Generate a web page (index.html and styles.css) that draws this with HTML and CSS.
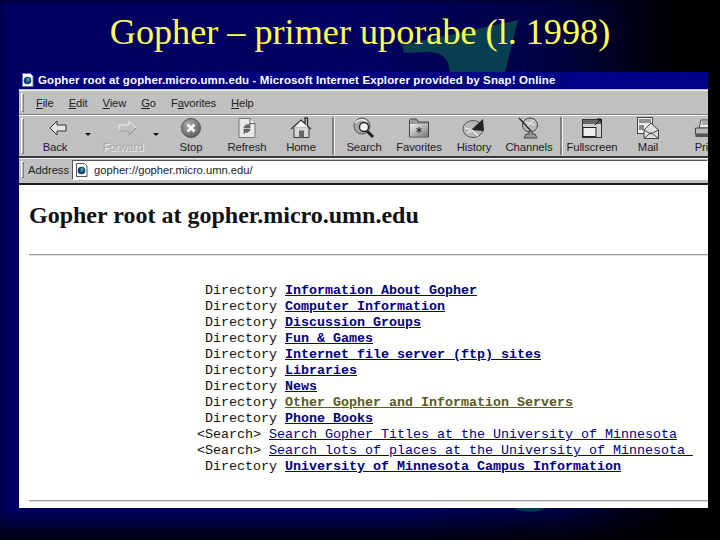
FILE: index.html
```html
<!DOCTYPE html>
<html lang="sl">
<head>
<meta charset="utf-8">
<title>Gopher – primer uporabe</title>
<link rel="stylesheet" href="styles.css">
</head>
<body>
<main class="slide">
  <svg class="bg-shape" width="720" height="540" viewBox="0 0 720 540" aria-hidden="true">
    <path d="M402 45 L518 20 L505 72 L450 72 C449 60 443 52 428 52 L404 53 Z" fill="#073f50"/>
    <path d="M514 508 C522 513 538 513 546 508 Z" fill="#063650"/>
  </svg>
  <h1 class="slide-title">Gopher – primer uporabe (l. 1998)</h1>
  <section class="window">
    <div class="titlebar">
      <svg class="page-icon" width="13" height="14" viewBox="0 0 13 14"><path d="M1.500 .5h8l2.500 2.500v10.500H1.500z" fill="#fff" stroke="#777"/><circle cx="6.500" cy="7.500" r="3.800" fill="#123a78"/><path d="M5 5.500l3-1 1 3-3 2z" fill="#3a9a9a"/></svg>
      <span class="title-text">Gopher root at gopher.micro.umn.edu - Microsoft Internet Explorer provided by Snap! Online</span>
    </div>
    <div class="bar menubar">
      <span class="grip"></span>
      <span class="menu"><u>F</u>ile</span>
      <span class="menu"><u>E</u>dit</span>
      <span class="menu"><u>V</u>iew</span>
      <span class="menu"><u>G</u>o</span>
      <span class="menu">F<u>a</u>vorites</span>
      <span class="menu"><u>H</u>elp</span>
    </div>
    <div class="bar toolbar">
      <span class="grip"></span>
      <div class="tool w50">
        <svg width="28" height="22" viewBox="0 0 28 22"><path d="M9 11l7-7v4h9v6h-9v4z" fill="#e4e4e4" stroke="#333"/></svg>
        <span>Back</span>
      </div>
      <span class="drop"></span>
      <div class="tool w50 off">
        <svg width="28" height="22" viewBox="0 0 28 22"><path d="M27 11l-7-7v4H10v6h10v4z" fill="none" stroke="#f0f0f0"/><path d="M27 11l-7 7v-4H10" fill="none" stroke="#8c8c8c"/></svg>
        <span>Forward</span>
      </div>
      <span class="drop drop-last"></span>
      <div class="tool w54">
        <svg width="22" height="22" viewBox="0 0 22 22"><defs><radialGradient id="stopfill" cx=".35" cy=".3" r=".8"><stop offset="0" stop-color="#aaa"/><stop offset="1" stop-color="#5a5a5a"/></radialGradient></defs><circle cx="11" cy="11" r="9.500" fill="url(#stopfill)" stroke="#555"/><path d="M7.500 7.500l7 7M14.500 7.500l-7 7" stroke="#fff" stroke-width="2.600"/></svg>
        <span>Stop</span>
      </div>
      <div class="tool w58">
        <svg width="20" height="22" viewBox="0 0 20 22"><path d="M2 1.500h11l5 5v14H2z" fill="#e8e8e8" stroke="#777"/><path d="M13 1.500v5h5" fill="#fff" stroke="#555"/><path d="M7 11c0-3 3-4 5-3l1-2v5h-3M13 12c0 3-3 4-5 3l-1 2v-5h3" fill="#666" stroke="#555" stroke-width=".6"/></svg>
        <span>Refresh</span>
      </div>
      <div class="tool w50">
        <svg width="22" height="22" viewBox="0 0 22 22"><path d="M4 11v9.500h15V11" fill="#d8d8d8" stroke="#333"/><path d="M1 12L11 3l4 3.500V1h2.500v8L21 12" fill="none" stroke="#333" stroke-width="1.300"/><path d="M11 4l6 6H5z" fill="#f4f4f4"/><rect x="9" y="13.500" width="5" height="7" fill="#666"/></svg>
        <span>Home</span>
      </div>
      <span class="sep"></span>
      <div class="tool w48">
        <svg width="24" height="22" viewBox="0 0 24 22"><circle cx="10" cy="9" r="8" fill="#a8a8a8" stroke="#555"/><path d="M3 6c3-4 9-4 12-1" stroke="#eee" stroke-width="1.500" fill="none"/><circle cx="12" cy="10" r="4.500" fill="#f0f0f0" stroke="#222" stroke-width="1.300"/><path d="M15 14l6 6" stroke="#222" stroke-width="3"/></svg>
        <span>Search</span>
      </div>
      <div class="tool w62">
        <svg width="22" height="20" viewBox="0 0 22 20"><defs><linearGradient id="favfill" x1="0" x2="1" y1="0" y2="1"><stop offset="0" stop-color="#f2f2f2"/><stop offset="1" stop-color="#777"/></linearGradient></defs><path d="M1.500 5V2.500c0-1 1-1.500 2-1.500h5l2 3h10v15H1.500z" fill="#9a9a9a" stroke="#444"/><path d="M2 6h18v12.500H2z" fill="url(#favfill)"/><path d="M11 9v6M8.400 10.500l5.200 3M13.600 10.500l-5.200 3" stroke="#222"/></svg>
        <span>Favorites</span>
      </div>
      <div class="tool w48">
        <svg width="24" height="22" viewBox="0 0 24 22"><ellipse cx="11" cy="12" rx="10" ry="8.500" fill="#b8b8b8" stroke="#555"/><path d="M9 13L21 2l1 12z" fill="#222"/><path d="M3 11l7 2 6 6M5 16l4-2" stroke="#f4f4f4" stroke-width="1.200" fill="none"/></svg>
        <span>History</span>
      </div>
      <div class="tool w62">
        <svg width="22" height="22" viewBox="0 0 22 22"><ellipse cx="12" cy="8" rx="7.500" ry="7" fill="#bbb" stroke="#444"/><path d="M1 1l12 13" stroke="#222" stroke-width="1.200"/><path d="M9 9l7-6M8 5l9 3" stroke="#eee"/><path d="M11 14h3v3h3l2 4H6l2-4h3z" fill="#999" stroke="#444"/></svg>
        <span>Channels</span>
      </div>
      <span class="sep sep-thin"></span>
      <div class="tool w60">
        <svg width="22" height="22" viewBox="0 0 22 22"><rect x="1.500" y="2.500" width="19" height="18" fill="#d0d0d0" stroke="#333"/><rect x="2" y="3" width="18" height="4" fill="#666"/><rect x="2" y="10.500" width="13" height="9" fill="#eee" stroke="#222"/><path d="M14 8l6-6M16 2h4v4" stroke="#111" fill="none"/></svg>
        <span>Fullscreen</span>
      </div>
      <div class="tool w52">
        <svg width="22" height="22" viewBox="0 0 22 22"><rect x=".5" y=".5" width="15" height="16" fill="#eee" stroke="#444"/><path d="M2 3h12M2 5h12" stroke="#333"/><rect x="2" y="8" width="5" height="5" fill="#888"/><path d="M7 13l7-7 7.500 7v8.500H7z" fill="#ddd" stroke="#444"/><path d="M7 21.500l7-6 7.500 6M7 13l7 4 7.500-4" fill="none" stroke="#444"/></svg>
        <span>Mail</span>
      </div>
      <div class="tool w64">
        <svg width="24" height="22" viewBox="0 0 24 22"><path d="M7 3h12l-2 8H5z" fill="#f0f0f0" stroke="#444"/><path d="M8 5h9M7.500 7h9" stroke="#666"/><path d="M1.500 11h21v6h-21z" fill="#bbb" stroke="#444"/><path d="M1.500 17h21v3h-21z" fill="#555"/></svg>
        <span>Print</span>
      </div>
    </div>
    <div class="bar addressbar">
      <span class="grip"></span>
      <span class="addr-label">Address</span>
      <div class="addr-field">
        <svg width="13" height="14" viewBox="0 0 13 14"><path d="M1.500 .5h8l2.500 2.500v10.500H1.500z" fill="#fff" stroke="#555"/><circle cx="6.500" cy="7.500" r="3.800" fill="#123a78"/><path d="M5 5.500l3-1 1 3-3 2z" fill="#3a9a9a"/></svg>
        <span>gopher://gopher.micro.umn.edu/</span>
      </div>
    </div>
    <div class="content">
      <h2 class="doc-title">Gopher root at gopher.micro.umn.edu</h2>
      <hr class="rule">
      <pre class="listing"> Directory <a href="#">Information About Gopher</a>
 Directory <a href="#">Computer Information</a>
 Directory <a href="#">Discussion Groups</a>
 Directory <a href="#">Fun &amp; Games</a>
 Directory <a href="#">Internet file server (ftp) sites</a>
 Directory <a href="#">Libraries</a>
 Directory <a href="#">News</a>
 Directory <a href="#" class="visited">Other Gopher and Information Servers</a>
 Directory <a href="#">Phone Books</a>
&lt;Search&gt; <a href="#" class="search">Search Gopher Titles at the University of Minnesota</a>
&lt;Search&gt; <a href="#" class="search">Search lots of places at the University of Minnesota </a>
 Directory <a href="#">University of Minnesota Campus Information</a></pre>
      <hr class="rule rule-end">
    </div>
  </section>
</main>
</body>
</html>
```
FILE: styles.css
```css
* { box-sizing: border-box; }
html, body { margin: 0; padding: 0; background: #000; }
.slide {
  position: relative;
  width: 720px;
  height: 540px;
  overflow: hidden;
  background:
    linear-gradient(180deg, rgba(0,0,0,.35) 0, rgba(0,0,0,0) 4px, rgba(0,0,0,0) 510px, rgba(0,0,0,.75) 536px),
    linear-gradient(90deg, #000048 0, #00005f 6px, #00005f 380px, #000040 560px, #000010 650px, #000 690px);
}
.bg-shape { position: absolute; left: 0; top: 0; }
.slide-title {
  position: relative;
  margin: 0;
  height: 72px;
  padding-top: 12px;
  font: 400 36.200px/40px "Liberation Serif", serif;
  color: #ffff55;
  text-align: center;
}
.window {
  position: relative;
  margin-left: 19px;
  width: 689px;
  height: 436px;
  background: #c0c0c0;
  overflow: hidden;
  font-family: "Liberation Sans", sans-serif;
  color: #111;
}
.titlebar {
  height: 17px;
  padding: 0 0 1px 2px;
  background: linear-gradient(90deg, #00007c, #000085);
  display: flex;
  align-items: center;
  gap: 4px;
  color: #fff;
}
.page-icon { flex: none; }
.title-text { font: 700 11.500px/16px "Liberation Sans", sans-serif; white-space: nowrap; letter-spacing: .12px; }
.bar { display: flex; align-items: center; border-top: 1px solid #f2f2f2; border-bottom: 1px solid #808080; white-space: nowrap; }
.grip { flex: none; width: 3px; margin: 2px 0 2px 2px; align-self: stretch; background: #c0c0c0; border: 1px solid; border-color: #fff #808080 #808080 #fff; }
.menubar { height: 25px; margin-top: 1px; font-size: 11.200px; color: #222; }
.menu { margin-left: 12px; letter-spacing: -.1px; }
.menu + .menu { margin-left: 15px; }
.toolbar { height: 43px; font-size: 11.300px; border-bottom: 2px solid #3a3a3a; color: #222; }
.tool { flex: none; display: flex; flex-direction: column; align-items: center; justify-content: flex-end; height: 40px; padding-bottom: 2px; letter-spacing: -.1px; }
.tool svg { display: block; height: 22px; margin-bottom: 1px; }
.tool span { line-height: 14px; }
.w48 { width: 48px; } .w50 { width: 50px; } .w52 { width: 52px; } .w54 { width: 54px; }
.w58 { width: 58px; } .w60 { width: 60px; } .w62 { width: 62px; } .w64 { width: 64px; }
.toolbar .grip + .tool { margin-left: 6px; }
.off span { color: #a4a4a4; text-shadow: 1px 1px 0 #f0f0f0; }
.drop { flex: none; width: 18px; height: 14px; position: relative; top: -2px; }
.drop-last { width: 16px; }
.drop::after { content: ""; position: absolute; left: 5px; top: 6px; border: 3px solid transparent; border-top-color: #111; border-bottom-width: 0; }
.sep { flex: none; width: 14px; height: 38px; position: relative; }
.sep::after { content: ""; position: absolute; left: 6px; top: 0; bottom: 0; width: 2px; background: #808080; border-right: 1px solid #f2f2f2; }
.sep-thin { width: 2px; }
.sep-thin::after { left: 0; }
.addressbar { height: 27px; font-size: 11.200px; border-bottom: 2px solid #1c1c1c; padding-bottom: 3px; color: #222; }
.addr-label { margin-left: 4px; width: 44px; flex: none; }
.addr-field { flex: 1; height: 20px; background: #fff; border: 1px solid; border-color: #555 #fff #fff #555; display: flex; align-items: center; gap: 6px; padding-left: 2px; }
.content { height: 323px; background: #fff; padding: 0 0 0 10px; overflow: hidden; color: #000; }
.doc-title { margin: 0; padding-top: 16px; font: 700 24px/28px "Liberation Serif", serif; color: #111; }
.rule { display: block; margin: 25px 0 0; border: 0; border-top: 1px solid #9a9a9a; border-bottom: 1px solid #e4e4e4; height: 2px; }
.listing { margin: 27px 0 0 168px; font: 400 13.330px/16px "Liberation Mono", monospace; color: #111; }
.listing a { color: #000080; font-weight: 700; text-decoration: underline; }
.listing a.visited { color: #5b5b1e; }
.listing a.search { font-weight: 400; }
.rule-end { margin-top: 25px; }
```
